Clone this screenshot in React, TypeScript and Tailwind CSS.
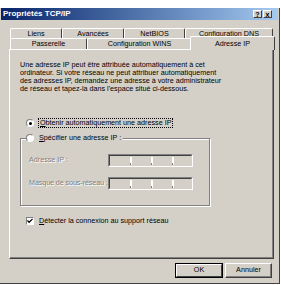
import React from "react";

const Radio = ({ checked }: { checked?: boolean }) => (
  <div className="w-[8px] h-[8px] rounded-full border border-t-[#808080] border-l-[#808080] border-r-white border-b-white bg-white flex items-center justify-center shrink-0">
    {checked && <div className="w-[3px] h-[3px] rounded-full bg-black" />}
  </div>
);

const IpField = () => (
  <div className="w-[85px] h-[13px] shrink-0 border border-t-[#808080] border-l-[#808080] border-r-white border-b-white">
    <div className="w-full h-full border border-t-[#404040] border-l-[#404040] border-r-[#d4d0c8] border-b-[#d4d0c8] flex items-center pl-[20px] gap-[19px]">
      {[0, 1, 2].map((i) => (
        <div key={i} className="w-[2px] h-[8px] bg-white flex flex-col justify-end">
          <div className="w-[1px] h-[2px] bg-[#808080]" />
        </div>
      ))}
    </div>
  </div>
);

const tab =
  "flex items-center justify-center border-t border-l border-r border-t-white border-l-white border-r-[#404040] rounded-t-[2px]";

const App = () => {
  return (
    <div
      className="w-[281px] h-[285px] bg-white pt-[8px] text-black"
      style={{ fontFamily: '"Liberation Sans", Arial, sans-serif' }}
    >
      <div className="w-[280px] h-[276px] bg-[#d4d0c8] border-r border-b border-[#404040] flex flex-col">
        {/* title bar */}
        <div className="h-[12px] ml-[1px] mr-[1px] bg-gradient-to-r from-[#0a246a] to-[#a6caf0] flex items-center justify-between pl-[2px] pr-[6px]">
          <span className="text-white font-bold text-[8px] leading-none">Propriétés TCP/IP</span>
          <div className="flex gap-[1px]">
            <div className="w-[9px] h-[8px] bg-[#d4d0c8] border border-t-white border-l-white border-r-[#404040] border-b-[#404040] flex items-center justify-center text-[7px] font-bold leading-none">?</div>
            <div className="w-[9px] h-[8px] bg-[#d4d0c8] border border-t-white border-l-white border-r-[#404040] border-b-[#404040] flex items-center justify-center text-[7px] font-bold leading-none">x</div>
          </div>
        </div>

        {/* tabs */}
        <div className="mt-[8px] ml-[10px] w-[263px] text-[7.2px] leading-none">
          <div className="flex h-[10px]">
            <div className={`${tab} w-[52px]`}>Liens</div>
            <div className={`${tab} w-[62px]`}>Avancées</div>
            <div className={`${tab} w-[61px]`}>NetBIOS</div>
            <div className={`${tab} w-[88px]`}>Configuration DNS</div>
          </div>
          <div className="flex h-[11px] items-end">
            <div className={`${tab} w-[77px] h-[11px]`}>Passerelle</div>
            <div className={`${tab} w-[105px] h-[11px]`}>Configuration WINS</div>
            <div className={`${tab} relative z-10 w-[85px] h-[14px] -mx-[2px] -mb-[1px] bg-[#d4d0c8] items-start pt-[3px]`}>Adresse IP</div>
          </div>
        </div>

        {/* panel */}
        <div className="ml-[9px] w-[265px] h-[210px] border border-t-white border-l-white border-r-[#404040] border-b-[#404040] shadow-[inset_-1px_-1px_0_#808080] pl-[10px] pt-[11px] text-[7.2px]">
          <p className="leading-[8px] whitespace-nowrap">
            Une adresse IP peut être attribuée automatiquement à cet
            <br />
            ordinateur. Si votre réseau ne peut attribuer automatiquement
            <br />
            des adresses IP, demandez une adresse à votre administrateur
            <br />
            de réseau et tapez-la dans l'espace situé ci-dessous.
          </p>

          <div className="mt-[25px] h-[10px] ml-[6px] flex items-center gap-[4px]">
            <Radio checked />
            <span className="border border-dotted border-black px-[1px] leading-[8px] whitespace-nowrap">
              <span className="underline">O</span>btenir automatiquement une adresse IP
            </span>
          </div>

          <fieldset className="mt-[5px] w-[190px] border border-[#808080] shadow-[inset_1px_1px_0_#fff,1px_1px_0_#fff] pl-[8px] pt-[11px] pb-[15px]">
            <legend className="ml-[-3px] pr-[2px] h-[10px] flex items-center gap-[5px] bg-[#d4d0c8]">
              <Radio />
              <span className="leading-none whitespace-nowrap">
                <span className="underline">S</span>pécifier une adresse IP :
              </span>
            </legend>
            <div className="flex items-center">
              <span className="w-[79px] shrink-0 whitespace-nowrap text-[#808080] [text-shadow:1px_1px_0_#fff]">Adresse IP :</span>
              <IpField />
            </div>
            <div className="flex items-center mt-[10px]">
              <span className="w-[79px] shrink-0 whitespace-nowrap text-[#808080] [text-shadow:1px_1px_0_#fff] tracking-[-0.1px]">Masque de sous-réseau :</span>
              <IpField />
            </div>
          </fieldset>

          <div className="mt-[10px] h-[10px] ml-[6px] flex items-center gap-[5px]">
            <div className="w-[8px] h-[8px] bg-white border border-t-[#808080] border-l-[#808080] border-r-white border-b-white flex items-center justify-center">
              <svg width="6" height="6" viewBox="0 0 7 7">
                <path d="M0.5 3 L2.5 5 L6.5 1" stroke="black" strokeWidth="1.5" fill="none" />
              </svg>
            </div>
            <span className="leading-none whitespace-nowrap">
              <span className="underline">D</span>étecter la connexion au support réseau
            </span>
          </div>
        </div>

        {/* buttons */}
        <div className="mt-[4px] ml-[175px] flex gap-[2px] text-[7.2px]">
          <div className="w-[48px] h-[15px] border border-black">
            <div className="w-full h-full border border-t-white border-l-white border-r-[#404040] border-b-[#404040] flex items-center justify-center">OK</div>
          </div>
          <div className="w-[47px] h-[15px] border border-t-white border-l-white border-r-[#404040] border-b-[#404040] shadow-[inset_-1px_-1px_0_#808080] flex items-center justify-center">Annuler</div>
        </div>
      </div>
    </div>
  );
};

export default App;
